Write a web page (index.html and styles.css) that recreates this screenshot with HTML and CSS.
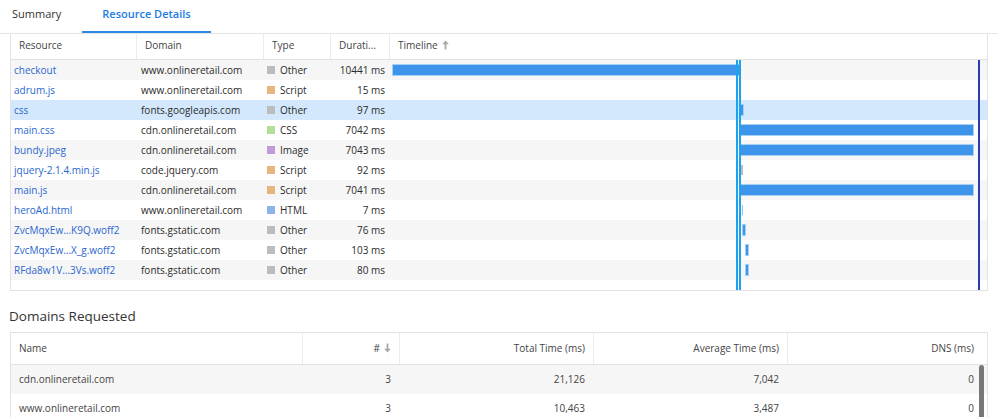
FILE: index.html
```html
<!DOCTYPE html>
<html lang="en">
<head>
    <meta charset="UTF-8">
    <title>Resource Details</title>
    <link rel="stylesheet" href="styles.css">
</head>
<body>
    <div class="tabs">
        <div class="tab">Summary</div>
        <div class="tab tab-active">Resource Details</div>
    </div>

    <div class="res-table">
        <div class="res-head">
            <div class="hcell">Resource</div>
            <div class="hcell">Domain</div>
            <div class="hcell">Type</div>
            <div class="hcell">Durati...</div>
            <div class="hcell">Timeline
                <svg class="sort-arrow" width="7" height="10" viewBox="0 0 7 10"><path d="M3.5 0.5 L6.8 4.2 H4.4 V9.5 H2.6 V4.2 H0.2 Z" fill="#a8a8a8"/></svg>
            </div>
        </div>
        <div class="res-body">
            <div class="res-row odd">
                <div class="cell link">checkout</div><div class="cell">www.onlineretail.com</div>
                <div class="cell type"><span class="swatch other"></span>Other</div><div class="cell dur">10441 ms</div>
                <div class="cell tl"><span class="bar" style="margin-left:4px;width:347px"></span></div>
            </div>
            <div class="res-row">
                <div class="cell link">adrum.js</div><div class="cell">www.onlineretail.com</div>
                <div class="cell type"><span class="swatch script"></span>Script</div><div class="cell dur">15 ms</div>
                <div class="cell tl"></div>
            </div>
            <div class="res-row selected">
                <div class="cell link">css</div><div class="cell">fonts.googleapis.com</div>
                <div class="cell type"><span class="swatch other"></span>Other</div><div class="cell dur">97 ms</div>
                <div class="cell tl"><span class="bar" style="margin-left:352px;width:2px"></span></div>
            </div>
            <div class="res-row">
                <div class="cell link">main.css</div><div class="cell">cdn.onlineretail.com</div>
                <div class="cell type"><span class="swatch css"></span>CSS</div><div class="cell dur">7042 ms</div>
                <div class="cell tl"><span class="bar" style="margin-left:352px;width:232px"></span></div>
            </div>
            <div class="res-row odd">
                <div class="cell link">bundy.jpeg</div><div class="cell">cdn.onlineretail.com</div>
                <div class="cell type"><span class="swatch image"></span>Image</div><div class="cell dur">7043 ms</div>
                <div class="cell tl"><span class="bar" style="margin-left:352px;width:232px"></span></div>
            </div>
            <div class="res-row">
                <div class="cell link">jquery-2.1.4.min.js</div><div class="cell">code.jquery.com</div>
                <div class="cell type"><span class="swatch script"></span>Script</div><div class="cell dur">92 ms</div>
                <div class="cell tl"><span class="bar bar-gray" style="margin-left:352px;width:2px"></span></div>
            </div>
            <div class="res-row odd">
                <div class="cell link">main.js</div><div class="cell">cdn.onlineretail.com</div>
                <div class="cell type"><span class="swatch script"></span>Script</div><div class="cell dur">7041 ms</div>
                <div class="cell tl"><span class="bar" style="margin-left:352px;width:232px"></span></div>
            </div>
            <div class="res-row">
                <div class="cell link">heroAd.html</div><div class="cell">www.onlineretail.com</div>
                <div class="cell type"><span class="swatch html"></span>HTML</div><div class="cell dur">7 ms</div>
                <div class="cell tl"><span class="bar bar-thin" style="margin-left:353px;width:1px"></span></div>
            </div>
            <div class="res-row odd">
                <div class="cell link">ZvcMqxEw...K9Q.woff2</div><div class="cell">fonts.gstatic.com</div>
                <div class="cell type"><span class="swatch other"></span>Other</div><div class="cell dur">76 ms</div>
                <div class="cell tl"><span class="bar" style="margin-left:354px;width:2px"></span></div>
            </div>
            <div class="res-row">
                <div class="cell link">ZvcMqxEw...X_g.woff2</div><div class="cell">fonts.gstatic.com</div>
                <div class="cell type"><span class="swatch other"></span>Other</div><div class="cell dur">103 ms</div>
                <div class="cell tl"><span class="bar" style="margin-left:357px;width:2px"></span></div>
            </div>
            <div class="res-row odd">
                <div class="cell link">RFda8w1V...3Vs.woff2</div><div class="cell">fonts.gstatic.com</div>
                <div class="cell type"><span class="swatch other"></span>Other</div><div class="cell dur">80 ms</div>
                <div class="cell tl"><span class="bar" style="margin-left:357px;width:2px"></span></div>
            </div>

            <!-- timing markers over the timeline column -->
            <div class="tl-overlay">
                <span class="marker marker-a"></span>
                <span class="marker marker-b"></span>
                <span class="marker marker-end"></span>
            </div>
        </div>
    </div>

    <h2 class="section-title">Domains Requested</h2>

    <div class="dom-table">
        <div class="dom-head">
            <div class="dcell">Name</div>
            <div class="dcell num">#
                <svg class="sort-arrow" width="7" height="10" viewBox="0 0 7 10"><path d="M3.5 9.5 L6.8 5.8 H4.4 V0.5 H2.6 V5.8 H0.2 Z" fill="#a8a8a8"/></svg>
            </div>
            <div class="dcell num">Total Time (ms)</div>
            <div class="dcell num">Average Time (ms)</div>
            <div class="dcell num last">DNS (ms)</div>
        </div>
        <div class="dom-body">
            <div class="dom-row odd">
                <div class="dcell">cdn.onlineretail.com</div>
                <div class="dcell num">3</div>
                <div class="dcell num">21,126</div>
                <div class="dcell num">7,042</div>
                <div class="dcell num last">0</div>
            </div>
            <div class="dom-row">
                <div class="dcell">www.onlineretail.com</div>
                <div class="dcell num">3</div>
                <div class="dcell num">10,463</div>
                <div class="dcell num">3,487</div>
                <div class="dcell num last">0</div>
            </div>
            <div class="scroll-thumb"></div>
        </div>
    </div>
</body>
</html>
```

FILE: styles.css
```css
/* Global styles */
body {
    margin: 0;
    padding: 0;
    font-family: 'Open Sans', sans-serif;
    font-size: 10px;
    color: #2b2b2b;
    background: #fff;
    overflow: hidden;
}

/* Tabs */
.tabs {
    display: flex;
    height: 33px;
    border-bottom: 1px solid #e4e4e4;
}

.tab {
    padding: 6px 12px 0 12px;
    font-size: 11px;
    line-height: 16px;
    color: #333;
    box-sizing: border-box;
}

.tab-active {
    margin-left: 9px;
    padding: 6px 20px 0 20px;
    color: #1c7ce3;
    font-weight: 600;
    border-bottom: 2px solid #2b8ae6;
}

/* Resource table */
.res-table {
    margin-left: 10px;
    width: 978px;
    border: 1px solid #e2e2e2;
    border-top: none;
    box-sizing: border-box;
}

.res-head,
.res-row {
    display: grid;
    grid-template-columns: 125px 127px 67px 59px 1fr;
}

.res-head {
    height: 25px;
    border-bottom: 1px solid #e2e2e2;
}

.hcell {
    padding: 0 0 4px 8px;
    color: #444;
    height: 25px;
    box-sizing: border-box;
    display: flex;
    align-items: center;
    gap: 4px;
}

.hcell + .hcell {
    border-left: 1px solid #ececec;
}

.sort-arrow {
    display: inline-block;
}

.res-body {
    position: relative;
    padding-bottom: 10px;
}

.res-row {
    height: 20px;
    align-items: center;
}

.res-row.odd {
    background-color: #f6f6f6;
}

.res-row.selected {
    background-color: #d3e8fc;
}

.cell {
    padding-left: 4px;
    white-space: nowrap;
    overflow: hidden;
}

.cell:nth-child(2) {
    padding-left: 5px;
}

.link {
    padding-left: 3px;
    color: #2a66cf;
}

.type {
    display: flex;
    align-items: center;
}

.swatch {
    display: inline-block;
    width: 8px;
    height: 8px;
    margin-right: 5px;
}

.swatch.other { background-color: #bcbcbc; }
.swatch.script { background-color: #e8b67c; }
.swatch.css { background-color: #b2de98; }
.swatch.image { background-color: #c09bd8; }
.swatch.html { background-color: #8cb3ea; }

.dur {
    text-align: right;
    padding-right: 4px;
}

.cell.tl {
    display: flex;
    align-items: center;
    height: 20px;
    padding-left: 0;
}

.bar {
    display: block;
    height: 10px;
    background-color: #3d94ea;
    box-shadow: 0 0 0 1px #a6cff5;
    flex-shrink: 0;
}

.bar-gray {
    background-color: #bdbdbd;
    box-shadow: none;
}

.bar-thin {
    background-color: #8cc2f5;
    box-shadow: none;
}

/* markers over the timeline */
.tl-overlay {
    position: absolute;
    top: 0;
    bottom: 0;
    left: 378px;
    right: 0;
    pointer-events: none;
}

.marker {
    position: absolute;
    top: 0;
    bottom: 0;
    width: 2px;
    background-color: #1da3ee;
}

.marker-a { left: 347px; }
.marker-b { left: 350px; }

.marker-end {
    left: 589px;
    background-color: #2b3cb2;
}

/* Domains */
.section-title {
    margin: 15px 0 6px 9px;
    font-size: 13.5px;
    font-weight: 400;
    line-height: 20px;
    color: #333;
}

.dom-table {
    margin-left: 10px;
    width: 978px;
    border: 1px solid #e2e2e2;
    border-bottom: none;
    box-sizing: border-box;
}

.dom-head,
.dom-row {
    display: grid;
    grid-template-columns: 291px 97px 194px 194px 1fr;
    color: #444;
}

.dom-head {
    height: 31px;
    border-bottom: 1px solid #e2e2e2;
}

.dom-head .dcell {
    height: 31px;
    padding-bottom: 2px;
    box-sizing: border-box;
}

.dom-head .dcell + .dcell {
    border-left: 1px solid #ececec;
}

.dcell {
    display: flex;
    align-items: center;
    gap: 4px;
    padding: 0 8px;
    white-space: nowrap;
}

.dcell.num {
    justify-content: flex-end;
}

.dcell.last {
    padding-right: 13px;
}

.dom-body {
    position: relative;
}

.dom-row {
    height: 29px;
}

.dom-row .dcell {
    padding-bottom: 2px;
}

.dom-row.odd {
    background-color: #f6f6f6;
}

.scroll-thumb {
    position: absolute;
    top: 0;
    right: 3px;
    width: 5px;
    height: 80px;
    border-radius: 3px;
    background-color: #777;
}
```
